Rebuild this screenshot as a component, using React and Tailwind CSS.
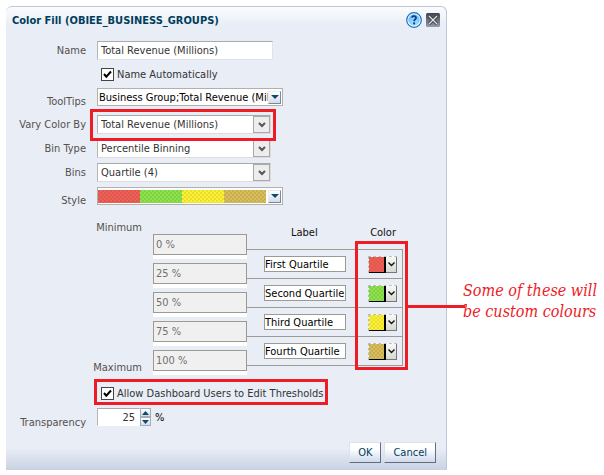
import React, { useState } from 'react';

const BANDS = [
  { id: 'first', label: 'First Quartile', fill: 'text-[#f05f55]' },
  { id: 'second', label: 'Second Quartile', fill: 'text-[#8ce34b]' },
  { id: 'third', label: 'Third Quartile', fill: 'text-[#fdf133]' },
  { id: 'fourth', label: 'Fourth Quartile', fill: 'text-[#d9bd59]' },
];

const THRESHOLDS = ['0 %', '25 %', '50 %', '75 %', '100 %'];

function Swatch({ id, className }) {
  return (
    <svg className={className} aria-hidden="true">
      <defs>
        <pattern id={id} width="4" height="4" patternUnits="userSpaceOnUse">
          <rect width="2" height="2" fill="#000" opacity="0.08" />
          <rect x="2" y="2" width="2" height="2" fill="#000" opacity="0.08" />
        </pattern>
      </defs>
      <rect width="100%" height="100%" fill="currentColor" />
      <rect width="100%" height="100%" fill={`url(#${id})`} />
    </svg>
  );
}

function Row({ label, htmlFor, className = '', labelClass = '', children }) {
  return (
    <div className={`flex items-center gap-[11px] ${className}`}>
      <label htmlFor={htmlFor} className={`w-20 shrink-0 text-right text-[#55504e] ${labelClass}`}>
        {label}
      </label>
      {children}
    </div>
  );
}

function Select({ id, value }) {
  return (
    <div className="relative h-[19px] w-[174px]">
      <select
        id={id}
        className="block h-full w-full appearance-none border border-t-[#aaaaac] border-l-[#b5b5b8] border-r-[#dcdcdc] border-b-[#dcdcdc] bg-white pl-[3px] text-[#333]"
      >
        <option>{value}</option>
      </select>
      <span className="pointer-events-none absolute inset-y-px right-px flex w-[17px] items-center justify-center border border-[#a9a9a9] bg-[#ededed]">
        <svg width="8" height="6" viewBox="0 0 8 6" aria-hidden="true">
          <path d="M1 1 L4 4 L7 1" fill="none" stroke="#555" strokeWidth="2" />
        </svg>
      </span>
    </div>
  );
}

function DropCap() {
  return (
    <span className="pointer-events-none flex h-[13px] w-[13px] shrink-0 items-center justify-center border border-t-[#e8ebf2] border-r-[#7e8795] border-b-[#7e8795] border-l-[#e8ebf2] bg-linear-to-b from-white to-[#d3dcec]">
      <svg width="8" height="4" viewBox="0 0 8 4" aria-hidden="true">
        <path d="M0 0 H8 L4 4 Z" fill="#0a4a6b" />
      </svg>
    </span>
  );
}

function Check({ id, children }) {
  const [on, setOn] = useState(true);
  return (
    <div className="flex items-center gap-[3px] text-[#333]">
      <span className="relative size-[13px]">
        <input
          id={id}
          type="checkbox"
          checked={on}
          onChange={() => setOn(!on)}
          className="block size-[13px] appearance-none border border-[#444] bg-white"
        />
        {on && (
          <svg className="pointer-events-none absolute inset-0 size-[13px]" viewBox="0 0 13 13" aria-hidden="true">
            <path d="M3 6 L5.3 8.7 L10 3.5" fill="none" stroke="#000" strokeWidth="2" />
          </svg>
        )}
      </span>
      <label htmlFor={id} className="whitespace-nowrap">{children}</label>
    </div>
  );
}

function Highlight({ className, children }) {
  return <div className={`pointer-events-none absolute z-10 border-3 border-[#ee1c25] ${className}`}>{children}</div>;
}

function Thresholds() {
  return (
    <div className="mt-[9px] mr-[43px] ml-[88px] flex">
      <div className="flex w-[48px] flex-col items-end justify-between pt-[5px] pb-px text-[#55504e]">
        <span>Minimum</span>
        <span>Maximum</span>
      </div>
      <div className="ml-[11px] flex w-[94px] shrink-0 flex-col gap-1 pt-[18px]">
        {THRESHOLDS.map((t) => (
          <div key={t} className="bg-white pb-1">
            <input
              aria-label={`Threshold ${t}`}
              disabled
              defaultValue={t}
              className="block h-[21px] w-full border border-[#9b9b93] bg-[#f0f0f0] px-[2px] text-[#707070]"
            />
          </div>
        ))}
      </div>
      <div className="relative grow">
        <div className="flex h-[33px] items-start justify-between pt-[10px] pr-[7px] pl-[44px] text-[#111]">
          <span>Label</span>
          <span>Color</span>
        </div>
        <div className="border-r border-b border-[#9b9b93]">
          {BANDS.map((b) => (
            <div key={b.id} className="flex h-[29px] items-center justify-between border-t border-[#9b9b93] pr-[5px] pl-[17px]">
              <input
                aria-label={`${b.label} label`}
                defaultValue={b.label}
                className="h-[16px] w-[82px] border border-[#9b9b93] bg-white text-black"
              />
              <button
                type="button"
                aria-label={`${b.label} color`}
                className="flex h-[17px] w-[29px] border-t border-l border-dashed border-[#bdbdbd] bg-white"
              >
                <span className="flex h-[16px] w-[17px] border-r-2 border-b border-black">
                  <Swatch id={`band-${b.id}`} className={`size-full ${b.fill}`} />
                </span>
                <span className="flex h-[16px] grow items-center justify-center border-r border-b border-[#777] bg-linear-to-b from-[#f8f8f5] to-[#d8d8d2]">
                  <svg width="7" height="5" viewBox="0 0 7 5" aria-hidden="true">
                    <path d="M0.5 0.5 L3.5 3.5 L6.5 0.5" fill="none" stroke="#111" strokeWidth="1.4" />
                  </svg>
                </span>
              </button>
            </div>
          ))}
        </div>
        <Highlight className="top-[25px] -right-[5px] bottom-[5px] w-[53px]">
          <span className="absolute top-[61px] left-full h-[3px] w-[60px] bg-[#ee1c25]" />
        </Highlight>
      </div>
    </div>
  );
}

function Dialog() {
  return (
    <section
      aria-label="Color Fill"
      className="min-w-0 grow rounded-t-md border-t border-r border-[#c0c6d9] bg-[linear-gradient(180deg,#fafcfc_0px,#e9edf6_18px,#e9edf6_calc(100%-22px),#c9d1e2_100%)] pb-[7px]"
    >
      <header className="flex h-[26px] items-center pr-[6px] pl-[6px]">
        <h1 className="grow font-bold text-[#003d5b]">Color Fill (OBIEE_BUSINESS_GROUPS)</h1>
        <button type="button" aria-label="Help">
          <svg width="16" height="16" viewBox="0 0 16 16" aria-hidden="true">
            <defs>
              <radialGradient id="help" cx="0.5" cy="0.8" r="0.8">
                <stop offset="0" stopColor="#a5e4ff" />
                <stop offset="1" stopColor="#63bdf5" />
              </radialGradient>
            </defs>
            <circle cx="8" cy="8" r="7.3" fill="#fff" stroke="#1a6cc4" strokeWidth="1.2" />
            <circle cx="8" cy="8" r="5.8" fill="url(#help)" />
            <path d="M5.9 5.6 C6.2 3.4 10.2 3.6 10 6 C9.9 7.4 8.1 7.4 8.1 9.3" fill="none" stroke="#0b3f8f" strokeWidth="1.8" />
            <rect x="7.1" y="10.4" width="2" height="2" fill="#0b3f8f" />
          </svg>
        </button>
        <button type="button" aria-label="Close" className="ml-[4px]">
          <svg width="14" height="14" viewBox="0 0 14 14" aria-hidden="true">
            <defs>
              <linearGradient id="close" x1="0" y1="0" x2="0" y2="1">
                <stop offset="0" stopColor="#3d4352" />
                <stop offset="1" stopColor="#939cb0" />
              </linearGradient>
            </defs>
            <rect width="14" height="14" rx="1.5" fill="url(#close)" />
            <path d="M3 3 L11 11 M11 3 L3 11" stroke="#333" strokeWidth="3" />
            <path d="M3 3 L11 11 M11 3 L3 11" stroke="#e8e8e8" strokeWidth="1.3" />
          </svg>
        </button>
      </header>

      <Row label="Name" htmlFor="name" className="mt-[8px]">
        <input
          id="name"
          defaultValue="Total Revenue (Millions)"
          className="h-[19px] w-[176px] border border-t-[#aaaaac] border-l-[#b5b5b8] border-r-[#e0e3ea] border-b-[#e0e3ea] bg-white pl-[3px] text-[#333]"
        />
      </Row>
      <div className="mt-[8px] ml-[95px]">
        <Check id="auto">Name Automatically</Check>
      </div>
      <Row label="ToolTips" htmlFor="tips" className="mt-[5px]" labelClass="pt-[9px]">
        <div className="flex h-[18px] w-[186px] items-center border border-[#b0b0ad] bg-white px-px">
          <select id="tips" className="h-[16px] min-w-0 grow appearance-none overflow-hidden text-clip text-black">
            <option>Business Group;Total Revenue (Millions)</option>
          </select>
          <DropCap />
        </div>
      </Row>
      <Row label="Vary Color By" htmlFor="vary" className="mt-[7px]">
        <div className="relative">
          <Select id="vary" value="Total Revenue (Millions)" />
          <Highlight className="-top-[6px] -right-[5px] -bottom-[7px] -left-[7px]" />
        </div>
      </Row>
      <Row label="Bin Type" htmlFor="bintype" className="mt-[5px]">
        <Select id="bintype" value="Percentile Binning" />
      </Row>
      <Row label="Bins" htmlFor="bins" className="mt-[5px]">
        <Select id="bins" value="Quartile (4)" />
      </Row>
      <Row label="Style" htmlFor="style" className="mt-[3px]" labelClass="pt-[9px]">
        <button
          id="style"
          type="button"
          className="flex h-[18px] w-[186px] items-center justify-between border border-[#b0b0ad] bg-white pr-px"
        >
          <span className="flex h-[13px] w-[168px]">
            {BANDS.map((b) => (
              <Swatch key={b.id} id={`style-${b.id}`} className={`h-full min-w-0 flex-1 ${b.fill}`} />
            ))}
          </span>
          <DropCap />
        </button>
      </Row>

      <Thresholds />

      <div className="relative mt-[12px] ml-[95px] w-fit">
        <Check id="allow">Allow Dashboard Users to Edit Thresholds</Check>
        <Highlight className="-top-[8px] -right-[4px] -bottom-[5px] -left-[7px]" />
      </div>

      <Row label="Transparency" htmlFor="transparency" className="mt-[5px]" labelClass="pt-[11px]">
        <div className="flex items-center">
          <input
            id="transparency"
            defaultValue="25"
            className="h-[18px] w-[43px] border border-t-[#aaaaac] border-l-[#b5b5b8] border-r-white border-b-white bg-white pr-[4px] text-right text-[#333]"
          />
          <div className="flex h-[18px] w-[11px] flex-col">
            <button type="button" aria-label="Increase" className="flex h-[9px] items-center justify-center border border-[#a4adbd] bg-linear-to-b from-white to-[#d3dcec]">
              <svg width="7" height="4" viewBox="0 0 7 4" aria-hidden="true">
                <path d="M0 4 H7 L3.5 0 Z" fill="#0a4a6b" />
              </svg>
            </button>
            <button type="button" aria-label="Decrease" className="flex h-[9px] items-center justify-center border border-[#a4adbd] bg-linear-to-b from-white to-[#d3dcec]">
              <svg width="7" height="4" viewBox="0 0 7 4" aria-hidden="true">
                <path d="M0 0 H7 L3.5 4 Z" fill="#0a4a6b" />
              </svg>
            </button>
          </div>
          <span className="ml-[4px] text-black">%</span>
        </div>
      </Row>

      <footer className="mt-[13px] flex justify-end gap-[3px] pr-[10px]">
        {['OK', 'Cancel'].map((t) => (
          <button
            key={t}
            type="button"
            className="h-[21px] border border-t-[#dfe1e6] border-r-[#666d7a] border-b-[#666d7a] border-l-[#dfe1e6] bg-linear-to-b from-white from-30% to-[#cfdaeb] px-[8px] text-[#003d5b]"
          >
            {t}
          </button>
        ))}
      </footer>
    </section>
  );
}

export default function App() {
  return (
    <main className="flex items-start bg-white pt-[6px] pl-[6px] font-['DejaVu_Sans_Condensed','DejaVu_Sans',sans-serif] text-[11px] leading-[13px]">
      <Dialog />
      <p className="w-[157px] shrink-0 pt-[274px] pl-[16px] font-['DejaVu_Serif_Condensed','DejaVu_Serif',serif] text-[16px] leading-[21px] whitespace-nowrap text-[#ee1c25] italic">
        Some of these will
        <br />
        be custom colours
      </p>
    </main>
  );
}
